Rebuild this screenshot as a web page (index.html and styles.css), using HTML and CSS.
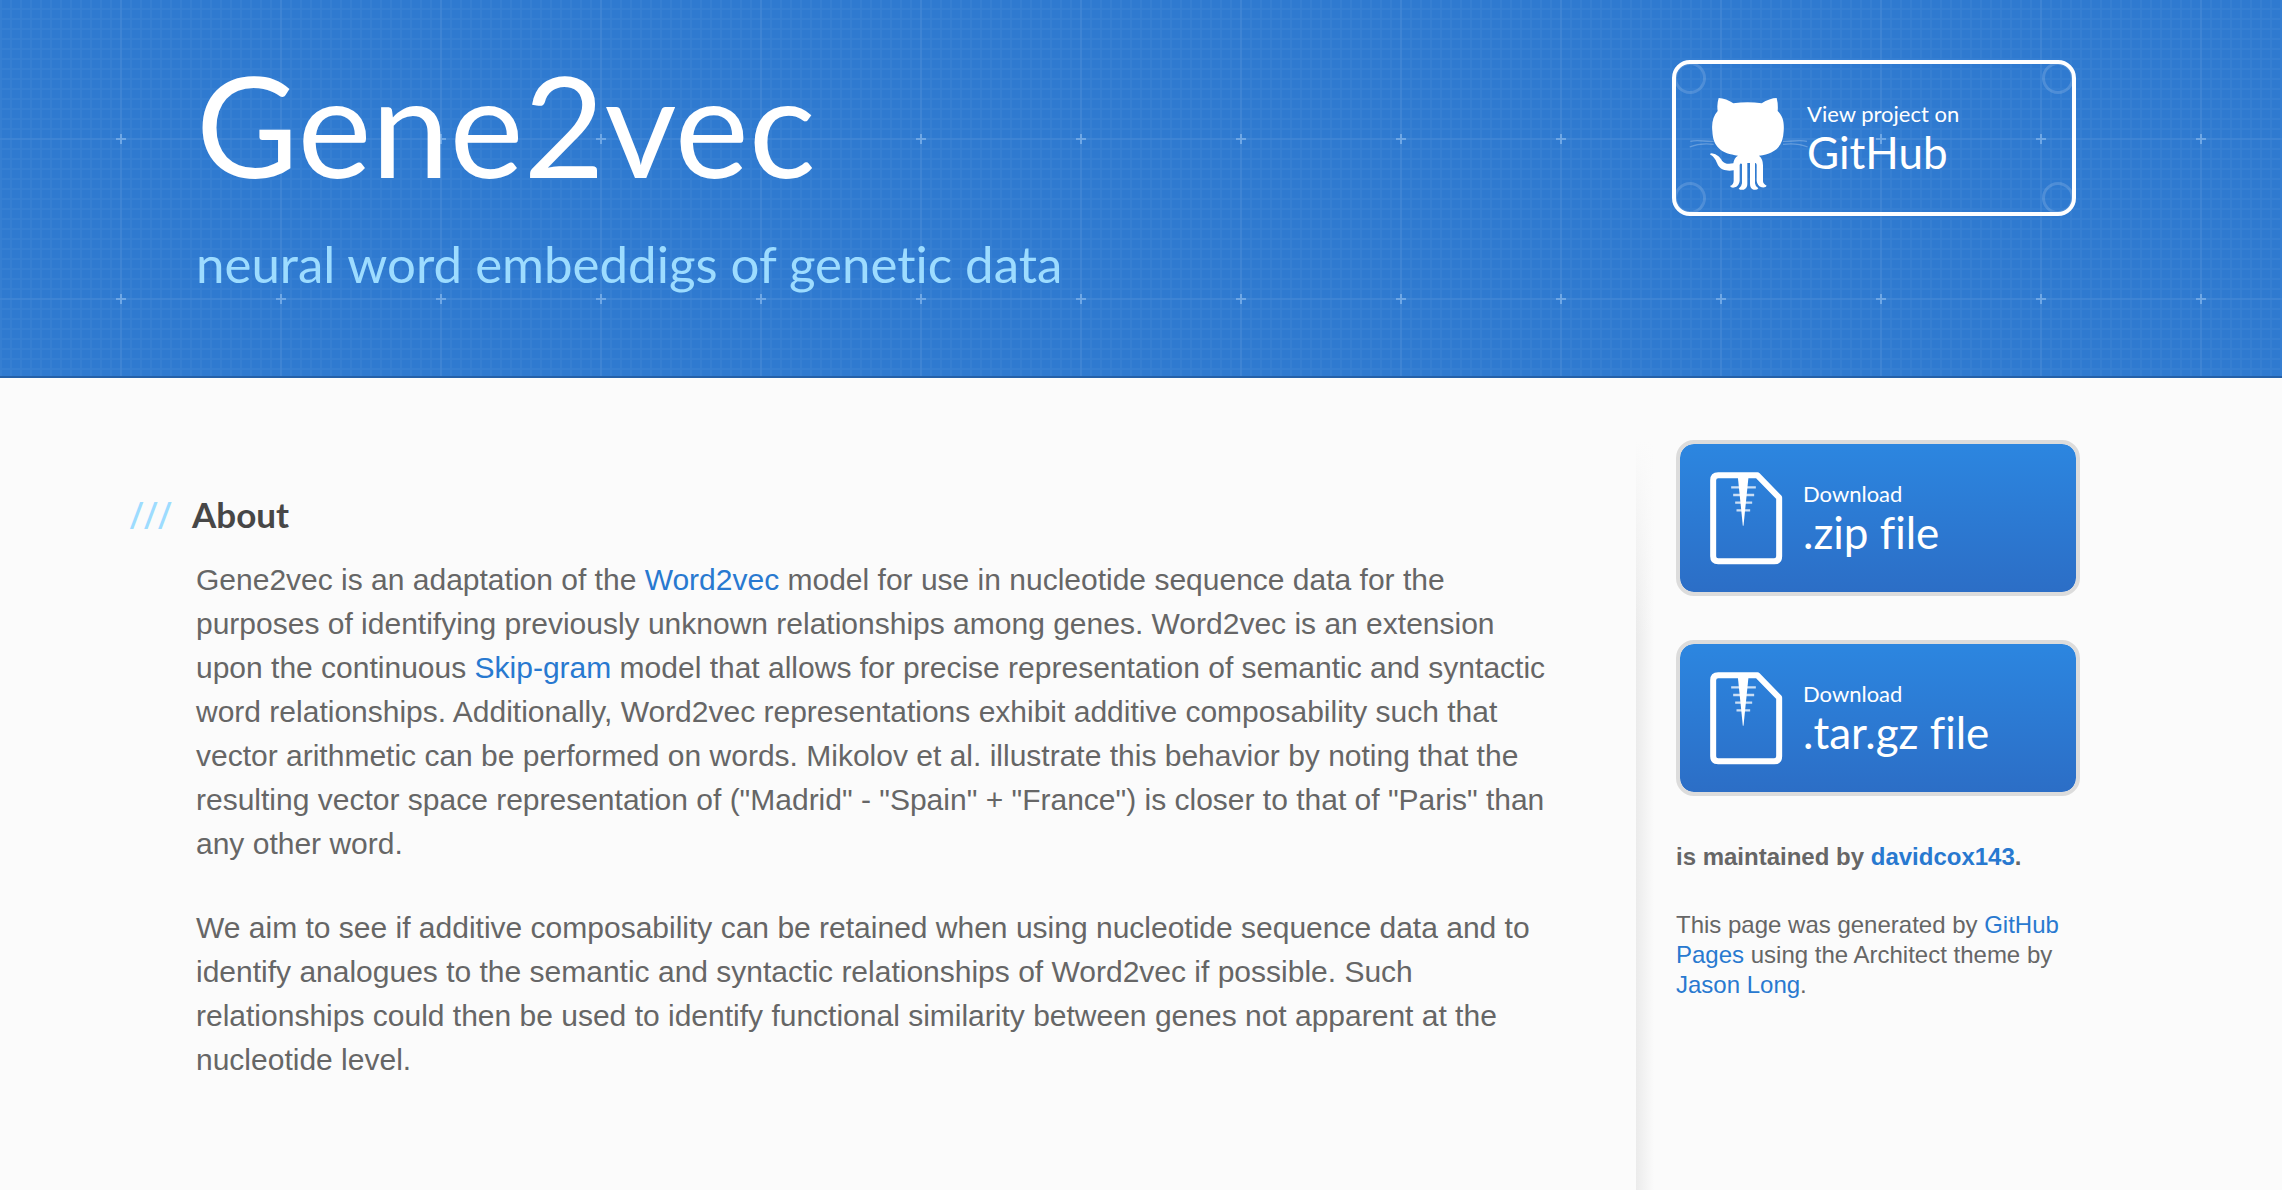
FILE: index.html
```html
<!DOCTYPE html>
<html lang="en">
<head>
  <meta charset="utf-8">
  <title>Gene2vec</title>
  <link rel="stylesheet" href="styles.css">
</head>
<body>
  <header class="site-header">
    <div class="inner header-row">
      <div class="branding">
        <h1 class="title">Gene2vec</h1>
        <h2 class="tagline">neural word embeddigs of genetic data</h2>
      </div>
      <a class="button button-github" href="#">
        <span class="rivet rivet-tl"></span><span class="rivet rivet-tr"></span>
        <span class="rivet rivet-bl"></span><span class="rivet rivet-br"></span>
        <svg class="octocat" viewBox="110 168 360 288" aria-hidden="true">
          <g fill="none" stroke="#fff" stroke-width="4" opacity=".25">
            <path d="M190 304C165 306 145 298 120 304"/>
            <path d="M190 313C160 309 140 312 118 321"/>
            <path d="M398 304C422 306 445 298 470 304"/>
            <path d="M398 313C428 309 450 312 472 321"/>
          </g>
          <path fill="#fff" d="M205 174C219 174 236 181 249 190Q292 184 334 190C349 180 366 174 379 174Q384 193 382 213C398 229 402 246 400 274C398 322 372 341 326 347Q338 357 338 376V424Q339 433 349 437Q347 444 334 442Q321 438 319 423V374Q318 368 314 369V430Q315 440 324 445Q320 451 310 449Q299 446 299 432V369H291V432Q291 445 280 449Q270 451 265 446Q274 440 275 430V372Q270 368 268 375V423Q266 438 254 442Q243 445 239 438Q250 433 250 422V391C232 394 212 391 203 376C197 361 192 350 180 344Q178 340 184 340C201 343 209 352 215 362Q224 375 249 370Q251 354 263 347C213 341 188 321 186 274C183 248 189 227 202 213Q199 193 205 174Z"/>
        </svg>
        <span class="button-text"><small>View project on</small>GitHub</span>
      </a>
    </div>
  </header>

  <div class="inner content-row">
    <main class="main-content">
      <h3 class="section-title">About</h3>
      <p>Gene2vec is an adaptation of the <a href="#">Word2vec</a> model for use in nucleotide sequence data for the purposes of identifying previously unknown relationships among genes. Word2vec is an extension upon the continuous <a href="#">Skip-gram</a> model that allows for precise representation of semantic and syntactic word relationships. Additionally, Word2vec representations exhibit additive composability such that vector arithmetic can be performed on words. Mikolov et al. illustrate this behavior by noting that the resulting vector space representation of ("Madrid" - "Spain" + "France") is closer to that of "Paris" than any other word.</p>
      <p>We aim to see if additive composability can be retained when using nucleotide sequence data and to identify analogues to the semantic and syntactic relationships of Word2vec if possible. Such relationships could then be used to identify functional similarity between genes not apparent at the nucleotide level.</p>
    </main>

    <aside class="sidebar">
      <a class="button button-download" href="#">
        <svg class="archive" viewBox="270 155 218 279" aria-hidden="true">
          <path fill="none" stroke="#fff" stroke-width="18" stroke-linejoin="round" d="M294 165H412L477 232V408Q477 423 462 423H294Q279 423 279 408V180Q279 165 294 165Z"/>
          <path fill="#fff" d="M353 170H385L370 316H368Z"/>
          <path stroke="#fff" stroke-width="7" opacity=".75" d="M333 201H407M339 224H402M345 247H396M349 270H390"/>
        </svg>
        <span class="button-text"><small>Download</small>.zip file</span>
      </a>
      <a class="button button-download" href="#">
        <svg class="archive" viewBox="270 155 218 279" aria-hidden="true">
          <path fill="none" stroke="#fff" stroke-width="18" stroke-linejoin="round" d="M294 165H412L477 232V408Q477 423 462 423H294Q279 423 279 408V180Q279 165 294 165Z"/>
          <path fill="#fff" d="M353 170H385L370 316H368Z"/>
          <path stroke="#fff" stroke-width="7" opacity=".75" d="M333 201H407M339 224H402M345 247H396M349 270H390"/>
        </svg>
        <span class="button-text"><small>Download</small>.tar.gz file</span>
      </a>
      <p class="owner">is maintained by <a href="#">davidcox143</a>.</p>
      <p class="credits">This page was generated by <a href="#">GitHub Pages</a> using the Architect theme by <a href="#">Jason Long</a>.</p>
    </aside>
  </div>
</body>
</html>
```
FILE: styles.css
```css
* {
  box-sizing: border-box;
}

body {
  margin: 0;
  background: #fbfbfb;
  color: #666;
  font: 30px/44px "Liberation Sans", Arial, sans-serif;
}

h1, h2, h3, p {
  margin: 0;
}

a {
  color: #2879d0;
  text-decoration: none;
}

.inner {
  max-width: 1890px;
  margin: 0 auto;
  padding-right: 6px;
  display: flex;
  justify-content: space-between;
}

.site-header {
  background-color: #2f7ad0;
  background-image: url("data:image/svg+xml,%3Csvg xmlns='http://www.w3.org/2000/svg' width='160' height='160'%3E%3Cdefs%3E%3Cpattern id='m' width='10' height='10' patternUnits='userSpaceOnUse'%3E%3Cpath d='M0 9h10M1 0v10' stroke='%23fff' stroke-width='2' stroke-opacity='.035'/%3E%3C/pattern%3E%3C/defs%3E%3Cpath fill='url(%23m)' d='M0 0h160v160H0z'/%3E%3Cpath d='M0 139h160M121 0v160' stroke='%23fff' stroke-width='2' stroke-opacity='.04'/%3E%3Cpath d='M116 139h10M121 134v10' stroke='%23b8dcff' stroke-width='2' stroke-opacity='.4'/%3E%3C/svg%3E");
  border-bottom: 2px solid #2460a8;
}

.header-row {
  padding-top: 56px;
  padding-bottom: 76px;
  align-items: flex-start;
}

.title,
.tagline,
.button {
  font-variant-ligatures: none;
}

.title,
.tagline {
  font-family: Lato, sans-serif;
  font-weight: 400;
}

.title {
  color: #fff;
  font-size: 140px;
  line-height: 136px;
}

.tagline {
  margin-top: 36px;
  color: #9ddcff;
  font-size: 51px;
  line-height: 72px;
}

.button {
  position: relative;
  display: flex;
  align-items: center;
  width: 404px;
  height: 156px;
  border: 4px solid;
  border-radius: 18px;
  color: #fff;
  font-family: Lato, sans-serif;
  font-size: 44px;
  line-height: 48px;
}

.button small {
  display: block;
  font-size: 22px;
  line-height: 28px;
}

.button-github {
  margin-top: 4px;
  margin-right: 4px;
  padding-left: 11px;
  border-color: #fff;
}

.octocat {
  width: 120px;
  height: 96px;
  margin-top: 12px;
  overflow: visible;
}

.rivet {
  position: absolute;
  width: 32px;
  height: 32px;
  border: 3px solid rgb(255 255 255 / 15%);
  border-radius: 50%;
}

.rivet-tl { top: -2px; left: -2px; }
.rivet-tr { top: -2px; right: -2px; }
.rivet-bl { bottom: -2px; left: -2px; }
.rivet-br { bottom: -2px; right: -2px; }

.button-download {
  gap: 20px;
  margin-bottom: 44px;
  padding-left: 30px;
  border-color: #dcdcdc;
  background: linear-gradient(#2c86e0, #2c6ec6) padding-box;
}

.archive {
  width: 73px;
  height: 93px;
}

.content-row {
  align-items: stretch;
  min-height: calc(100vh - 378px);
  padding-top: 62px;
}

.main-content {
  width: 1366px;
  padding-top: 52px;
}

.main-content p {
  margin-bottom: 40px;
}

.section-title {
  position: relative;
  margin-bottom: 22px;
  margin-left: -4px;
  color: #474747;
  font: 700 35px/44px Lato, sans-serif;
}

.section-title::before {
  content: "///";
  position: absolute;
  right: 100%;
  margin-right: 20px;
  color: #9ddcff;
  font: 400 38px/44px "Noto Sans", sans-serif;
}

.sidebar {
  width: 444px;
  padding-left: 40px;
  background:
    linear-gradient(#fbfbfb, rgb(251 251 251 / 0%)) no-repeat left top / 18px 200px,
    linear-gradient(90deg, #ebebeb, #fbfbfb) no-repeat left / 18px 100%;
}

.owner,
.credits {
  font-size: 24px;
  line-height: 30px;
}

.owner {
  margin-top: 46px;
  margin-bottom: 38px;
  font-weight: 700;
}
```
